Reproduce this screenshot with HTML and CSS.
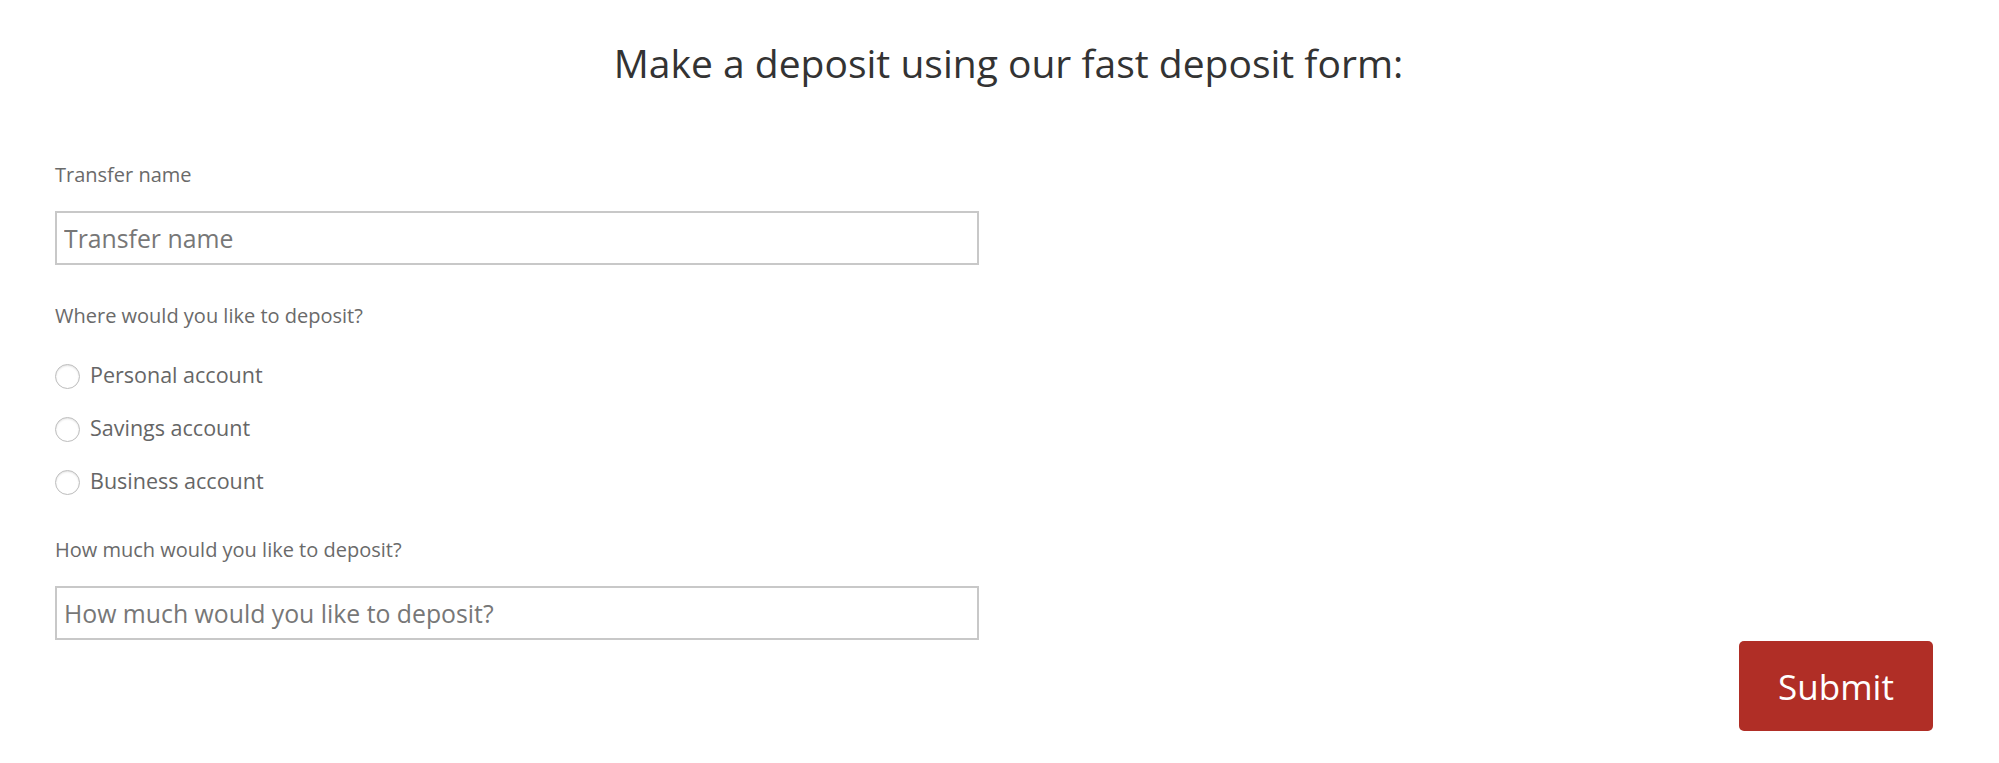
FILE: index.html
```html
<!DOCTYPE html>
<html lang="en">
<head>
<meta charset="utf-8">
<title>Fast deposit</title>
<link rel="stylesheet" href="styles.css">
</head>
<body>
<main class="page">
  <h1 class="title">Make a deposit using our fast deposit form:</h1>
  <form class="deposit-form">
    <div class="field">
      <label class="field-label" for="transfer-name">Transfer name</label>
      <input class="text-input" id="transfer-name" type="text" placeholder="Transfer name">
    </div>
    <fieldset class="field radio-field">
      <legend class="field-label">Where would you like to deposit?</legend>
      <div class="radio-list">
        <label class="radio-row"><input class="radio" type="radio" name="account"><span>Personal account</span></label>
        <label class="radio-row"><input class="radio" type="radio" name="account"><span>Savings account</span></label>
        <label class="radio-row"><input class="radio" type="radio" name="account"><span>Business account</span></label>
      </div>
    </fieldset>
    <div class="field amount-field">
      <label class="field-label" for="amount">How much would you like to deposit?</label>
      <input class="text-input" id="amount" type="text" placeholder="How much would you like to deposit?">
    </div>
    <div class="actions">
      <button class="submit" type="submit">Submit</button>
    </div>
  </form>
</main>
</body>
</html>
```

FILE: styles.css
```css
* { box-sizing: border-box; }
html, body { margin: 0; padding: 0; background: #fff; }
body {
  font-family: "Open Sans", "Noto Sans", sans-serif;
  color: #666;
}
.page {
  padding: 39px 66px 0 55px;
}
.title {
  margin: 0;
  padding-left: 29px;
  font-size: 39px;
  line-height: 48px;
  font-weight: 400;
  color: #333;
  text-align: center;
}
.deposit-form {
  display: flex;
  flex-direction: column;
  margin-top: 76px;
}
.field {
  display: flex;
  flex-direction: column;
  width: 924px;
}
.field-label {
  font-size: 20px;
  line-height: 24px;
  color: #6a6a6a;
  padding: 0;
}
.text-input {
  margin-top: 24px;
  height: 54px;
  width: 924px;
  border: 2px solid #c8c8c8;
  border-radius: 0;
  padding: 0 7px;
  font-family: "Open Sans", "Noto Sans", sans-serif;
  font-size: 24.8px;
  color: #555;
  background: #fff;
  outline: none;
}
.text-input::placeholder { color: #777; opacity: 1; }
.radio-field {
  border: 0;
  margin: 39px 0 0;
  padding: 0;
  min-width: 0;
}
.radio-field legend { float: left; }
.radio-list {
  clear: both;
  display: flex;
  flex-direction: column;
  gap: 20px;
  padding-top: 32px;
}
.radio-row {
  display: flex;
  align-items: center;
  gap: 10px;
  height: 33px;
  font-size: 21.5px;
  color: #666;
}
.radio-row span { position: relative; top: -2px; }
.radio {
  appearance: none;
  -webkit-appearance: none;
  margin: 0;
  width: 25px;
  height: 25px;
  border: 1px solid #bdbdbd;
  border-radius: 50%;
  background: #fff;
  box-shadow: inset 0 1px 2px rgba(0,0,0,0.12);
  flex: none;
}
.amount-field { margin-top: 39px; }
.actions {
  display: flex;
  justify-content: flex-end;
  margin-top: 1px;
}
.submit {
  width: 194px;
  height: 90px;
  border: 0;
  border-radius: 5px;
  background: #b02e26;
  color: #fff;
  font-family: "Open Sans", "Noto Sans", sans-serif;
  font-size: 35px;
  padding: 0;
  cursor: pointer;
}
```
